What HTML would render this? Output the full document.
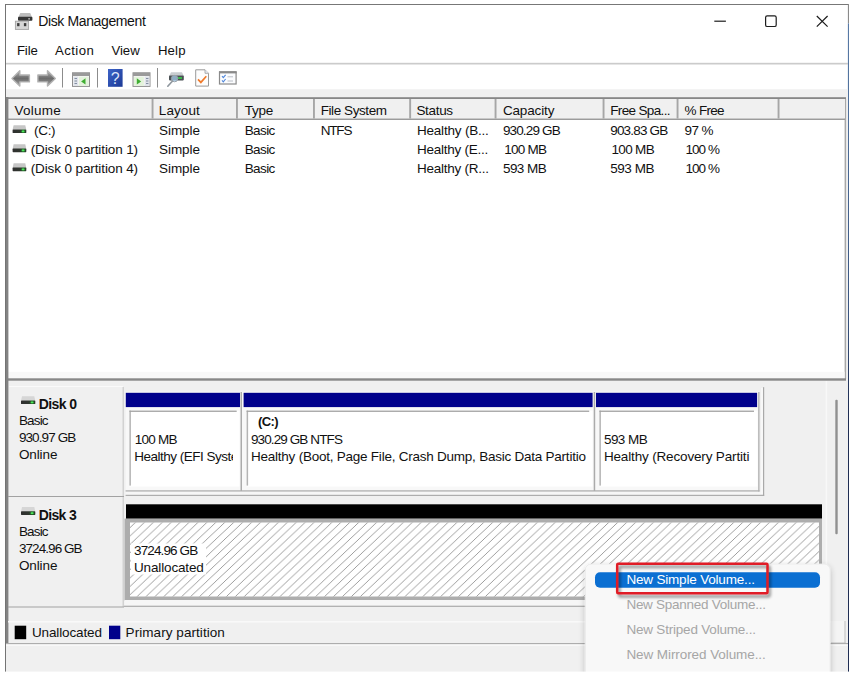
<!DOCTYPE html>
<html><head><meta charset="utf-8"><title>Disk Management</title>
<style>
*{box-sizing:border-box;margin:0;padding:0}
html,body{width:854px;height:674px;overflow:hidden;background:#fff}
body{font-family:"Liberation Sans",sans-serif;font-size:13.5px;color:#111;position:relative}
.a{position:absolute}
.t{position:absolute;white-space:pre;line-height:16px;height:16px}
</style></head><body>
<svg class="a" style="left:0;top:0" width="854" height="674" viewBox="0 0 854 674">
<rect x="0" y="0" width="854" height="674" fill="#fff"/>
<rect x="5" y="4" width="844" height="1" fill="#777"/>
<rect x="5" y="4" width="1" height="668" fill="#747474"/>
<rect x="847.9" y="4" width="1.2" height="19.4" fill="#8a8a8a"/>
<defs><linearGradient id="rbg" x1="0" y1="0" x2="0" y2="1"><stop offset="0" stop-color="#587aa6"/><stop offset="0.45" stop-color="#3a5580"/><stop offset="0.6" stop-color="#1f2d52"/><stop offset="1" stop-color="#1f2d52"/></linearGradient></defs>
<rect x="847.9" y="23.4" width="1.2" height="648.6" fill="url(#rbg)"/>
<g><path d="M20.3 13h9.9l1.8 4.2h-13.6z" fill="#bdbdbd"/>
<rect x="18" y="16.8" width="14.4" height="3.9" rx="0.9" fill="#353535"/>
<rect x="28.3" y="18.2" width="1.6" height="1.3" fill="#c9c9c9"/>
<rect x="15.4" y="21.2" width="13.2" height="8.2" fill="#d6d6d6" stroke="#a3a3a3" stroke-width="0.9"/>
<rect x="17.1" y="23.1" width="2.4" height="3.1" fill="#3c3c3c"/>
<rect x="23.9" y="23.1" width="2.4" height="3.1" fill="#3c3c3c"/></g>
<g stroke="#1c1c1c" stroke-width="1.2" fill="none"><path d="M714.3 21.2h11.6"/>
<rect x="765.6" y="15.9" width="10.6" height="10.6" rx="1.6"/>
<path d="M816.8 16l10.8 10.6M827.6 16l-10.8 10.6"/></g>
<rect x="6" y="62.8" width="842" height="1.7" fill="#cbcbcb"/>
<rect x="6" y="89.2" width="842" height="9" fill="#f0f0f0"/>
<g>
 <defs>
  <linearGradient id="ga" x1="0" y1="0" x2="0" y2="1"><stop offset="0" stop-color="#adadad"/><stop offset="0.5" stop-color="#6c6c6c"/><stop offset="1" stop-color="#a2a2a2"/></linearGradient>
  <linearGradient id="gh" x1="0" y1="0" x2="1" y2="1"><stop offset="0" stop-color="#3d63c8"/><stop offset="1" stop-color="#1c3a96"/></linearGradient>
 </defs>
 <!-- back / forward arrows -->
 <path d="M12 78.4L19.8 70.8V75h9.6v6.9H19.8v4.2z" fill="url(#ga)" stroke="#b2b2b2" stroke-width="1.4" stroke-linejoin="round"/>
 <path d="M55.3 78.4L47.5 70.8V75h-9.6v6.9h9.6v4.2z" fill="url(#ga)" stroke="#b2b2b2" stroke-width="1.4" stroke-linejoin="round"/>
 <rect x="62" y="68" width="1" height="19.5" fill="#8c8c8c"/>
 <!-- show/hide console tree -->
 <rect x="72.5" y="72.8" width="17" height="13.6" fill="#f4f4f4" stroke="#8e8e8e" stroke-width="1"/>
 <rect x="72.5" y="72.8" width="17" height="3.2" fill="#9a9a9a"/>
 <rect x="73.5" y="76.5" width="4.5" height="9.4" fill="#dfe3ea"/>
 <path d="M74.5 78.5h2.5M74.5 81h2.5M74.5 83.5h2.5" stroke="#6c7a90" stroke-width="0.8"/>
 <rect x="79" y="76.8" width="9.8" height="9" fill="#e4f3dc"/>
 <path d="M85.5 78.2v6.4l-4.4-3.2z" fill="#3fae32"/>
 <rect x="97" y="68" width="1" height="19.5" fill="#8c8c8c"/>
 <!-- help -->
 <rect x="108" y="69" width="14.6" height="17.8" fill="url(#gh)"/>
 <text x="115.3" y="84.2" font-family="Liberation Sans, sans-serif" font-size="16" fill="#dbe4fa" text-anchor="middle">?</text>
 <!-- show/hide action pane -->
 <rect x="133" y="72.8" width="17" height="13.6" fill="#f4f4f4" stroke="#8e8e8e" stroke-width="1"/>
 <rect x="133" y="72.8" width="17" height="3.2" fill="#9a9a9a"/>
 <rect x="134" y="76.8" width="9.8" height="9" fill="#e4f3dc"/>
 <path d="M136.8 78.2v6.4l4.4-3.2z" fill="#3fae32"/>
 <rect x="144.8" y="76.5" width="4.6" height="9.4" fill="#dfe3ea"/>
 <path d="M146 78.5h2.4M146 81h2.4M146 83.5h2.4" stroke="#6c7a90" stroke-width="0.8"/>
 <rect x="157" y="68" width="1" height="19.5" fill="#8c8c8c"/>
 <!-- rescan disks -->
 <path d="M171 72.3h11l1.7 3.5h-14.4z" fill="#c9cdd0"/>
 <rect x="169" y="75.6" width="14.8" height="4.8" rx="0.8" fill="#4a5054"/>
 <rect x="178" y="77.2" width="4" height="1.6" fill="#38d04a"/>
 <circle cx="174.6" cy="78.6" r="3.2" fill="#a9d3f2" fill-opacity="0.7" stroke="#9aa3ab" stroke-width="1"/>
 <path d="M172.3 81.2L167.8 86.2" stroke="#8f979e" stroke-width="1.6" stroke-linecap="round"/>
 <!-- properties doc w/ check -->
 <path d="M195.7 69.8h9.3l3.5 3.5v12.8h-12.8z" fill="#fdfdfd" stroke="#9a9a9a" stroke-width="1"/>
 <path d="M205 69.8v3.5h3.5" fill="#e8eef8" stroke="#9a9a9a" stroke-width="0.8"/>
 <path d="M198 79.3l2.9 3.1l5.4-6.1" fill="none" stroke="#f07a2a" stroke-width="1.7"/>
 <!-- checklist -->
 <rect x="219.5" y="72" width="16.6" height="12" fill="#fbfcfe" stroke="#8a8a8a" stroke-width="1.2"/>
 <rect x="219" y="71.2" width="17.6" height="2.2" fill="#8a8a8a"/>
 <path d="M222 76.2l1.3 1.4l2.3-2.8M222 80.4l1.3 1.4l2.3-2.8" fill="none" stroke="#4f86da" stroke-width="1.1"/>
 <path d="M227.5 76.8h5.5M227.5 81h5.5" stroke="#b9bec6" stroke-width="1"/>
</g>
<rect x="846" y="97" width="2" height="575" fill="#f0f0f0"/>
<rect x="6" y="97.2" width="840" height="1.9" fill="#878787"/>
<rect x="844.6" y="99" width="1.5" height="280" fill="#a8a8a8"/>
<rect x="8" y="99" width="837" height="19.6" fill="#f0f0f0"/>
<rect x="8" y="118.5" width="837" height="1.5" fill="#9b9b9b"/>
<rect x="151.6" y="99" width="1.9" height="19.6" fill="#a6a6a6"/>
<rect x="236" y="99" width="1.9" height="19.6" fill="#a6a6a6"/>
<rect x="313" y="99" width="1.9" height="19.6" fill="#a6a6a6"/>
<rect x="409.2" y="99" width="1.9" height="19.6" fill="#a6a6a6"/>
<rect x="494.6" y="99" width="1.9" height="19.6" fill="#a6a6a6"/>
<rect x="602.6" y="99" width="1.9" height="19.6" fill="#a6a6a6"/>
<rect x="676.6" y="99" width="1.9" height="19.6" fill="#a6a6a6"/>
<rect x="777.6" y="99" width="1.9" height="19.6" fill="#a6a6a6"/>
<defs><linearGradient id="dg" x1="0" y1="0" x2="1" y2="0"><stop offset="0" stop-color="#2f2f2f"/><stop offset="0.55" stop-color="#30362f"/><stop offset="0.8" stop-color="#1f6a25"/><stop offset="1" stop-color="#2a2f2a"/></linearGradient></defs><g transform="translate(12.6 125)"><path d="M1 0.2h11.7l1 4.6h-13.7z" fill="#c6c6c6"/><rect x="0" y="4.5" width="13.7" height="3.6" rx="0.6" fill="url(#dg)"/><rect x="9.1" y="5.4" width="2.8" height="1.8" rx="0.5" fill="#4be65a"/></g><g transform="translate(12.6 144.1)"><path d="M1 0.2h11.7l1 4.6h-13.7z" fill="#c6c6c6"/><rect x="0" y="4.5" width="13.7" height="3.6" rx="0.6" fill="url(#dg)"/><rect x="9.1" y="5.4" width="2.8" height="1.8" rx="0.5" fill="#4be65a"/></g><g transform="translate(12.6 163.1)"><path d="M1 0.2h11.7l1 4.6h-13.7z" fill="#c6c6c6"/><rect x="0" y="4.5" width="13.7" height="3.6" rx="0.6" fill="url(#dg)"/><rect x="9.1" y="5.4" width="2.8" height="1.8" rx="0.5" fill="#4be65a"/></g>
<rect x="8" y="371.8" width="836.6" height="7" fill="#f8f8f8"/>
<rect x="6" y="379" width="842" height="293" fill="#f0f0f0"/>
<rect x="6" y="378.3" width="840" height="2.4" fill="#888"/>
<rect x="6" y="97" width="2.4" height="547" fill="#838383"/>
<rect x="9" y="386" width="114" height="1" fill="#fafafa"/>
<rect x="122.5" y="387" width="1.5" height="220" fill="#d2d2d2"/>
<rect x="8" y="496" width="116" height="1" fill="#a2a2a2"/>
<rect x="8" y="606.5" width="116" height="1" fill="#a2a2a2"/>
<g transform="translate(21 396)"><path d="M1 0.2h12.3l1 4.6h-14.3z" fill="#d6d6d6"/><rect x="0" y="4.5" width="14.3" height="3.6" rx="0.6" fill="url(#dg)"/><rect x="9.700000000000001" y="5.4" width="2.8" height="1.8" rx="0.5" fill="#4be65a"/></g><g transform="translate(21 506.8)"><path d="M1 0.2h12.3l1 4.6h-14.3z" fill="#d6d6d6"/><rect x="0" y="4.5" width="14.3" height="3.6" rx="0.6" fill="url(#dg)"/><rect x="9.700000000000001" y="5.4" width="2.8" height="1.8" rx="0.5" fill="#4be65a"/></g>
<rect x="125.6" y="391.6" width="633" height="98.6" fill="#f8f8f8"/>
<rect x="125.6" y="491.6" width="636" height="3.2" fill="#f6f6f6"/>
<rect x="125.6" y="494.8" width="638.6" height="1.2" fill="#adadad"/>
<rect x="763" y="387.2" width="1.2" height="108.6" fill="#a9a9a9"/>
<rect x="761.2" y="388" width="1.6" height="106" fill="#fafafa"/>
<rect x="125.6" y="490.2" width="634" height="1.4" fill="#b6b6b6"/>
<rect x="758.2" y="392" width="1.3" height="99.5" fill="#b0b0b0"/>
<rect x="240.5" y="392" width="1.5" height="99" fill="#ababab"/>
<rect x="593.7" y="392" width="1.5" height="99" fill="#ababab"/>
<rect x="125.8" y="392.8" width="114.2" height="14.3" fill="#00008b"/>
<rect x="243.6" y="392.8" width="349" height="14.3" fill="#00008b"/>
<rect x="596" y="392.8" width="161.1" height="14.3" fill="#00008b"/>
<rect x="129.4" y="410.6" width="110" height="76" fill="#fff"/>
<rect x="129.4" y="410.6" width="1.5" height="75" fill="#b4b4b4"/>
<rect x="129.4" y="410.6" width="107.3" height="1.3" fill="#a4a4a4"/>
<rect x="246.6" y="410.6" width="346" height="76" fill="#fff"/>
<rect x="246.6" y="410.6" width="1.5" height="75" fill="#b4b4b4"/>
<rect x="246.6" y="410.6" width="342.6" height="1.3" fill="#a4a4a4"/>
<rect x="599.4" y="410.6" width="158.2" height="76" fill="#fff"/>
<rect x="599.4" y="410.6" width="1.5" height="75" fill="#b4b4b4"/>
<rect x="599.4" y="410.6" width="154.6" height="1.3" fill="#a4a4a4"/>
<rect x="126" y="504.3" width="696" height="14.5" fill="#000"/>
<defs><pattern id="h" width="8.93" height="8.4" patternUnits="userSpaceOnUse" x="130.75" y="518.5"><path d="M-1 9.34L9.93 -0.94M-1 0.94L1 -0.94M7.93 9.34L9.93 7.46" stroke="#8c8c8c" stroke-width="0.85"/></pattern></defs>
<rect x="124.5" y="518.6" width="697.5" height="82" fill="#adadad"/>
<rect x="130" y="522.5" width="689" height="74" fill="#fff"/>
<rect x="130" y="522.5" width="689" height="74" fill="url(#h)"/>
<rect x="131" y="543.5" width="75" height="31" fill="#fff"/>
<rect x="124.5" y="600" width="697.5" height="5.8" fill="#f6f6f6"/>
<rect x="124" y="605.7" width="702" height="1.2" fill="#ababab"/>
<rect x="8" y="621" width="823" height="1.5" fill="#f9f9f9"/>
<rect x="825.6" y="381" width="1.5" height="262" fill="#f8f8f8"/>
<rect x="835.3" y="399.7" width="2.4" height="134.6" fill="#909090" rx="1"/>
<rect x="831" y="621" width="14.5" height="22.5" fill="#f4f4f4"/>
<rect x="844.5" y="621" width="1" height="23" fill="#bdbdbd"/>
<rect x="831" y="642.5" width="14.5" height="1" fill="#bdbdbd"/>
<rect x="14.7" y="625.7" width="11.5" height="13.5" fill="#000"/>
<rect x="109" y="625.7" width="11.3" height="13.5" fill="#00008b"/>
<rect x="6" y="643" width="842" height="1.3" fill="#adadad"/>
<rect x="6" y="644.4" width="842" height="1.4" fill="#fbfbfb"/>
<defs><filter id="sh" x="-10%" y="-10%" width="120%" height="130%"><feGaussianBlur in="SourceAlpha" stdDeviation="3"/><feOffset dy="2"/><feComponentTransfer><feFuncA type="linear" slope="0.22"/></feComponentTransfer><feMerge><feMergeNode/><feMergeNode in="SourceGraphic"/></feMerge></filter>
<filter id="sh2" x="-10%" y="-20%" width="120%" height="150%"><feGaussianBlur in="SourceAlpha" stdDeviation="1.6"/><feOffset dx="1.5" dy="2.5"/><feComponentTransfer><feFuncA type="linear" slope="0.45"/></feComponentTransfer><feMerge><feMergeNode/><feMergeNode in="SourceGraphic"/></feMerge></filter></defs>
<rect x="585.2" y="564" width="245" height="120" rx="6" fill="#f8f8f8" stroke="#e8e8e8" stroke-width="0.8" filter="url(#sh)"/>
<rect x="595" y="572.3" width="225" height="15.4" rx="5" fill="#0b6fd2"/>
<rect x="617.2" y="563.8" width="150.3" height="29.4" rx="1" fill="none" stroke="#e01d25" stroke-width="2.5" filter="url(#sh2)"/>
<rect x="0" y="671.6" width="854" height="2.4" fill="#fff"/>
<rect x="0" y="0" width="5" height="674" fill="#fff"/>
<rect x="849" y="0" width="5" height="674" fill="#fff"/>
</svg>
<div class="t" style="left:38.20px;top:13.35px;font-size:14px;letter-spacing:-0.369px;">Disk Management</div>
<div class="t" style="left:16.90px;top:42.93px;font-size:13.2px;letter-spacing:-0.112px;">File</div>
<div class="t" style="left:54.90px;top:42.93px;font-size:13.2px;letter-spacing:0.441px;">Action</div>
<div class="t" style="left:111.40px;top:42.93px;font-size:13.2px;letter-spacing:-0.015px;">View</div>
<div class="t" style="left:157.90px;top:42.93px;font-size:13.2px;letter-spacing:0.169px;">Help</div>
<div class="t" style="left:14.40px;top:103.22px;font-size:13.5px;letter-spacing:0.278px;">Volume</div>
<div class="t" style="left:158.80px;top:103.22px;font-size:13.5px;letter-spacing:0.092px;">Layout</div>
<div class="t" style="left:244.70px;top:103.22px;font-size:13.5px;letter-spacing:-0.220px;">Type</div>
<div class="t" style="left:320.70px;top:103.22px;font-size:13.5px;letter-spacing:-0.420px;">File System</div>
<div class="t" style="left:416.40px;top:103.22px;font-size:13.5px;letter-spacing:-0.314px;">Status</div>
<div class="t" style="left:502.90px;top:103.22px;font-size:13.5px;letter-spacing:-0.141px;">Capacity</div>
<div class="t" style="left:610.20px;top:103.22px;font-size:13.5px;letter-spacing:-0.645px;">Free Spa...</div>
<div class="t" style="left:684.60px;top:103.22px;font-size:13.5px;letter-spacing:-0.719px;">% Free</div>
<div class="t" style="left:34.00px;top:122.82px;font-size:13.5px;letter-spacing:-0.300px;">(C:)</div>
<div class="t" style="left:30.70px;top:141.92px;font-size:13.5px;letter-spacing:-0.112px;">(Disk 0 partition 1)</div>
<div class="t" style="left:30.70px;top:160.92px;font-size:13.5px;letter-spacing:-0.112px;">(Disk 0 partition 4)</div>
<div class="t" style="left:159.00px;top:122.82px;font-size:13.5px;letter-spacing:-0.061px;">Simple</div>
<div class="t" style="left:244.70px;top:122.82px;font-size:13.5px;letter-spacing:-0.583px;">Basic</div>
<div class="t" style="left:159.00px;top:141.92px;font-size:13.5px;letter-spacing:-0.061px;">Simple</div>
<div class="t" style="left:244.70px;top:141.92px;font-size:13.5px;letter-spacing:-0.583px;">Basic</div>
<div class="t" style="left:159.00px;top:160.92px;font-size:13.5px;letter-spacing:-0.061px;">Simple</div>
<div class="t" style="left:244.70px;top:160.92px;font-size:13.5px;letter-spacing:-0.583px;">Basic</div>
<div class="t" style="left:320.70px;top:122.82px;font-size:13.5px;letter-spacing:-1.162px;">NTFS</div>
<div class="t" style="left:416.90px;top:122.82px;font-size:13.5px;letter-spacing:-0.191px;">Healthy (B...</div>
<div class="t" style="left:416.90px;top:141.92px;font-size:13.5px;letter-spacing:-0.252px;">Healthy (E...</div>
<div class="t" style="left:416.90px;top:160.92px;font-size:13.5px;letter-spacing:-0.249px;">Healthy (R...</div>
<div class="t" style="left:502.90px;top:122.82px;font-size:13.5px;letter-spacing:-0.850px;">930.29 GB</div>
<div class="t" style="left:504.20px;top:141.92px;font-size:13.5px;letter-spacing:-0.739px;">100 MB</div>
<div class="t" style="left:502.90px;top:160.92px;font-size:13.5px;letter-spacing:-0.522px;">593 MB</div>
<div class="t" style="left:610.20px;top:122.82px;font-size:13.5px;letter-spacing:-0.816px;">903.83 GB</div>
<div class="t" style="left:611.40px;top:141.92px;font-size:13.5px;letter-spacing:-0.639px;">100 MB</div>
<div class="t" style="left:610.20px;top:160.92px;font-size:13.5px;letter-spacing:-0.439px;">593 MB</div>
<div class="t" style="left:684.60px;top:122.82px;font-size:13.5px;letter-spacing:-0.595px;">97 %</div>
<div class="t" style="left:685.40px;top:141.92px;font-size:13.5px;letter-spacing:-0.896px;">100 %</div>
<div class="t" style="left:685.40px;top:160.92px;font-size:13.5px;letter-spacing:-0.896px;">100 %</div>
<div class="t" style="left:38.70px;top:395.75px;font-size:14px;letter-spacing:-0.558px;font-weight:bold;">Disk 0</div>
<div class="t" style="left:18.90px;top:413.32px;font-size:13.5px;letter-spacing:-0.823px;">Basic</div>
<div class="t" style="left:18.90px;top:430.32px;font-size:13.5px;letter-spacing:-0.894px;">930.97 GB</div>
<div class="t" style="left:18.90px;top:447.12px;font-size:13.5px;letter-spacing:-0.105px;">Online</div>
<div class="t" style="left:134.70px;top:432.22px;font-size:13.5px;letter-spacing:-0.722px;">100 MB</div>
<div class="t" style="left:134.20px;top:449.22px;font-size:13.5px;letter-spacing:-0.496px;width:99.2px;overflow:hidden">Healthy (EFI System</div>
<div class="t" style="left:258.00px;top:414.30px;font-size:13px;letter-spacing:-0.573px;font-weight:bold;">(C:)</div>
<div class="t" style="left:251.00px;top:432.12px;font-size:13.5px;letter-spacing:-0.896px;">930.29 GB NTFS</div>
<div class="t" style="left:251.00px;top:449.22px;font-size:13.5px;letter-spacing:-0.236px;">Healthy (Boot, Page File, Crash Dump, Basic Data Partitio</div>
<div class="t" style="left:603.90px;top:432.22px;font-size:13.5px;letter-spacing:-0.522px;">593 MB</div>
<div class="t" style="left:603.90px;top:449.22px;font-size:13.5px;letter-spacing:-0.156px;">Healthy (Recovery Partiti</div>
<div class="t" style="left:38.70px;top:506.55px;font-size:14px;letter-spacing:-0.625px;font-weight:bold;">Disk 3</div>
<div class="t" style="left:18.90px;top:524.12px;font-size:13.5px;letter-spacing:-0.823px;">Basic</div>
<div class="t" style="left:18.90px;top:540.92px;font-size:13.5px;letter-spacing:-0.926px;">3724.96 GB</div>
<div class="t" style="left:18.90px;top:557.92px;font-size:13.5px;letter-spacing:-0.105px;">Online</div>
<div class="t" style="left:134.00px;top:543.42px;font-size:13.5px;letter-spacing:-0.866px;">3724.96 GB</div>
<div class="t" style="left:134.00px;top:560.22px;font-size:13.5px;letter-spacing:-0.145px;">Unallocated</div>
<div class="t" style="left:31.90px;top:624.92px;font-size:13.5px;letter-spacing:-0.127px;">Unallocated</div>
<div class="t" style="left:125.60px;top:624.92px;font-size:13.5px;letter-spacing:0.060px;">Primary partition</div>
<div class="t" style="left:626.40px;top:572.42px;font-size:13.5px;letter-spacing:-0.183px;color:#fff;">New Simple Volume...</div>
<div class="t" style="left:626.40px;top:597.42px;font-size:13.5px;letter-spacing:-0.264px;color:#a6a6a6;">New Spanned Volume...</div>
<div class="t" style="left:626.40px;top:622.42px;font-size:13.5px;letter-spacing:-0.199px;color:#a6a6a6;">New Striped Volume...</div>
<div class="t" style="left:626.40px;top:647.42px;font-size:13.5px;letter-spacing:-0.079px;color:#a6a6a6;">New Mirrored Volume...</div>
</body></html>
